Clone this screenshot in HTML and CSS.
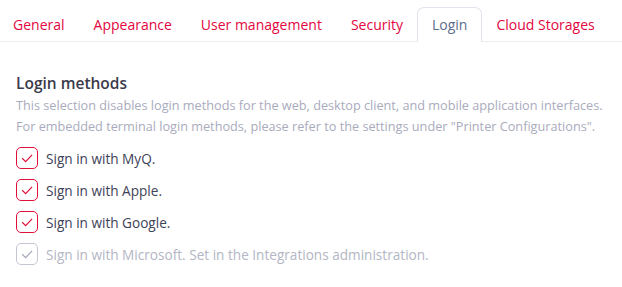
FILE: index.html
```html
<!DOCTYPE html>
<html>
<head>
    <title>Settings - Login</title>
    <link rel="stylesheet" href="styles.css">
</head>
<body>

    <nav class="tabs">
        <a class="tab">General</a>
        <a class="tab">Appearance</a>
        <a class="tab">User management</a>
        <a class="tab">Security</a>
        <a class="tab active">Login</a>
        <a class="tab">Cloud Storages</a>
    </nav>

    <section class="panel">
        <h2>Login methods</h2>
        <p class="hint">
            This selection disables login methods for the web, desktop client, and mobile application interfaces.<br>
            For embedded terminal login methods, please refer to the settings under "Printer Configurations".
        </p>

        <div class="options">
            <label class="option">
                <span class="box"><svg viewBox="0 0 12 12"><path d="M2.4 6.2 L5 8.8 L9.8 3.6"/></svg></span>
                Sign in with MyQ.
            </label>
            <label class="option">
                <span class="box"><svg viewBox="0 0 12 12"><path d="M2.4 6.2 L5 8.8 L9.8 3.6"/></svg></span>
                Sign in with Apple.
            </label>
            <label class="option">
                <span class="box"><svg viewBox="0 0 12 12"><path d="M2.4 6.2 L5 8.8 L9.8 3.6"/></svg></span>
                Sign in with Google.
            </label>
            <label class="option disabled">
                <span class="box"><svg viewBox="0 0 12 12"><path d="M2.4 6.2 L5 8.8 L9.8 3.6"/></svg></span>
                Sign in with Microsoft. Set in the Integrations administration.
            </label>
        </div>
    </section>

</body>
</html>
```

FILE: styles.css
```css
body {
    font-family: 'Open Sans', sans-serif;
    margin: 0;
    background: #fff;
    color: #3b3b4b;
}

.tabs {
    display: flex;
    padding-top: 7px;
    border-bottom: 1px solid #ededf0;
}

.tab {
    padding: 0 13.5px;
    height: 33px;
    line-height: 33px;
    font-size: 14px;
    color: #e2063f;
    border: 1px solid transparent;
    border-bottom: none;
    border-radius: 7px 7px 0 0;
    margin-bottom: -1px;
}

.tab:first-child {
    padding-left: 12px;
}

.tab.active {
    color: #5d6d8e;
    background: #fff;
    border-color: #e1e3ee;
    height: 34px;
}

.panel {
    padding: 0 16px;
}

h2 {
    margin: 31px 0 0;
    font-size: 15.5px;
    font-weight: 600;
    color: #3b3b4b;
    line-height: 20px;
}

.hint {
    margin: 2px 0 0;
    font-size: 12.7px;
    line-height: 21px;
    color: #a9abbd;
    white-space: nowrap;
}

.options {
    margin-top: 10px;
    display: flex;
    flex-direction: column;
    gap: 10px;
}

.option {
    display: flex;
    align-items: center;
    gap: 8px;
    font-size: 13.6px;
    color: #3e4257;
}

.box {
    width: 20px;
    height: 20px;
    border: 1px solid #e0103c;
    border-radius: 5px;
    display: flex;
    align-items: center;
    justify-content: center;
}

.box svg {
    width: 16px;
    height: 16px;
    fill: none;
    stroke: #e0103c;
    stroke-width: 0.9;
}

.option.disabled {
    color: #b3b6c4;
}

.option.disabled .box {
    border-color: #c3c6d3;
}

.option.disabled .box svg {
    stroke: #a2a6b6;
}
```
